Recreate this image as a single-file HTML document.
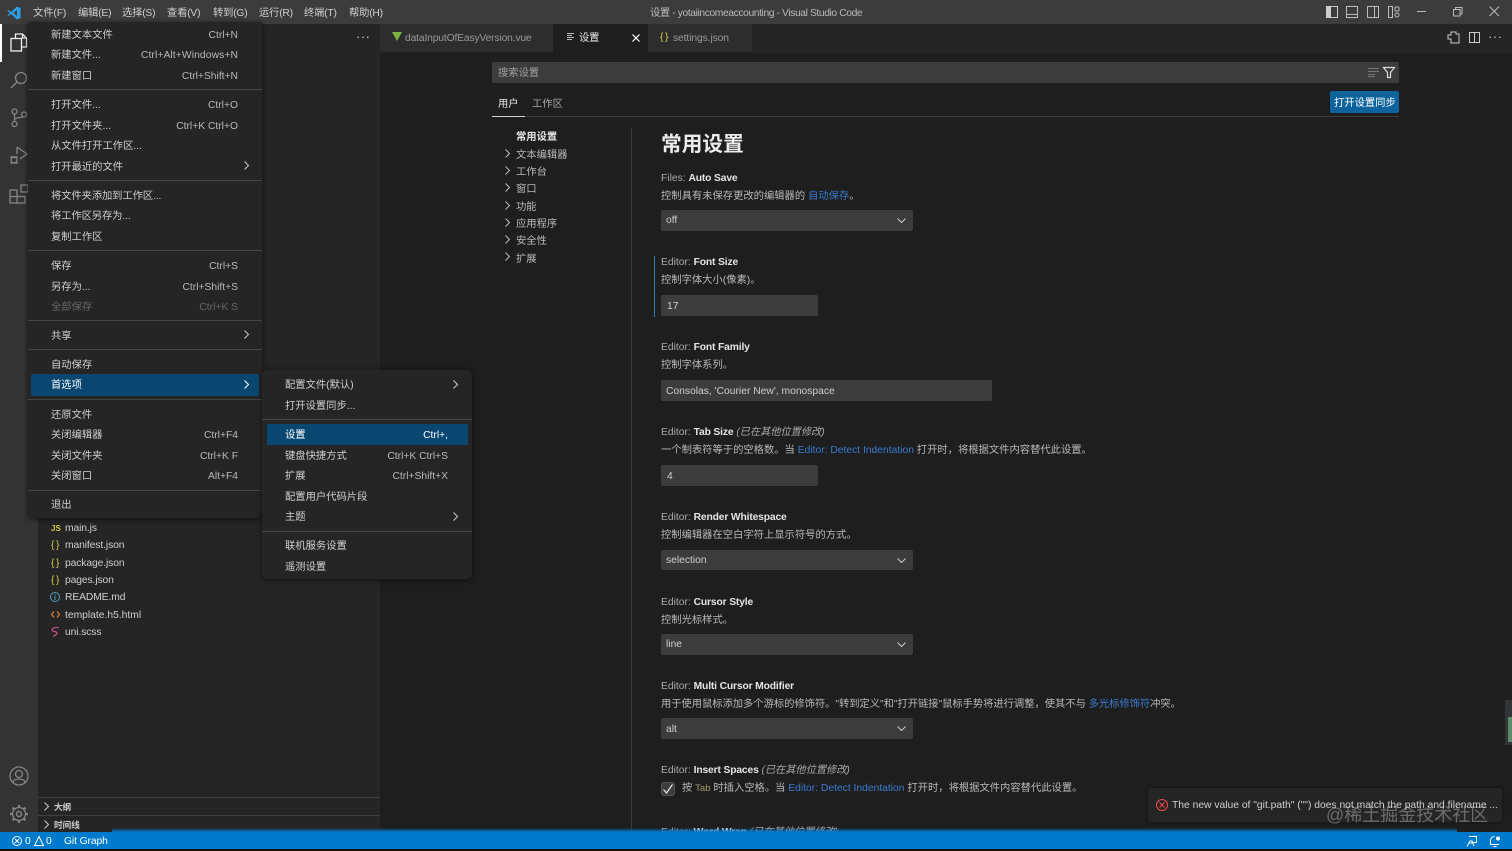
<!DOCTYPE html>
<html lang="zh-CN"><head><meta charset="utf-8"><title>设置 - yotaiincomeaccounting - Visual Studio Code</title>
<style>
*{box-sizing:border-box}
html,body{margin:0;width:1512px;height:851px;overflow:hidden;background:#1e1e1e}
body{position:relative;font:10.3px/14px "Liberation Sans","Noto Sans CJK SC",sans-serif;color:#ccc;filter:blur(.3px)}
.b{position:absolute}
.t{position:absolute;white-space:nowrap;transform:translateY(calc(-50% + 2px))}
.r{text-align:right}
.sep{position:absolute;height:1px;background:#454545}
.l{color:#3a7bd0}
.w{color:#e4e4e4;font-weight:bold;letter-spacing:-.15px}
.g{color:#aaa}
.in{position:absolute;background:#3c3c3c;border-radius:2px}
.i{font-style:italic;color:#aaa;letter-spacing:-.1px}
svg{position:absolute;overflow:visible}
.m{color:#cfcfcf}
.f{letter-spacing:-.1px}
.d{color:#b9b9b9}
.br{color:#cbcb41;letter-spacing:1.5px}
</style></head><body>

<!-- title bar -->
<div class="b" style="left:0;top:0;width:1512px;height:24px;background:#3c3c3c"></div>
<svg style="left:7px;top:6px" width="14" height="14" viewBox="0 0 14 14"><path d="M10 0.5 13.5 2v10L10 13.5 4 8l-2.600 2L.3 9.400 3 7 .3 4.600 1.400 4 4 6zM10 4 6.300 7 10 10z" fill="#2d9fe6"/></svg>
<div class="t m" style="left:33px;top:12px;letter-spacing:-.1px">文件(F)</div>
<div class="t m" style="left:78px;top:12px;letter-spacing:-.2px">编辑(E)</div>
<div class="t m" style="left:122px;top:12px;letter-spacing:-.2px">选择(S)</div>
<div class="t m" style="left:167px;top:12px;letter-spacing:-.2px">查看(V)</div>
<div class="t m" style="left:213px;top:12px;letter-spacing:-.2px">转到(G)</div>
<div class="t m" style="left:259px;top:12px;letter-spacing:-.2px">运行(R)</div>
<div class="t m" style="left:304px;top:12px;letter-spacing:-.2px">终端(T)</div>
<div class="t m" style="left:349px;top:12px;letter-spacing:-.2px">帮助(H)</div>
<div class="t d" style="left:650px;top:12px;letter-spacing:-.4px">设置 - yotaiincomeaccounting - Visual Studio Code</div>
<svg style="left:1326px;top:6px" width="12" height="12"><rect x=".5" y=".5" width="11" height="11" fill="none" stroke="#ccc"/><rect x="0" y="0" width="5" height="12" fill="#ccc"/></svg>
<svg style="left:1346px;top:6px" width="12" height="12"><rect x=".5" y=".5" width="11" height="11" fill="none" stroke="#bbb"/><path d="M0 8.500h12" stroke="#bbb"/></svg>
<svg style="left:1367px;top:6px" width="12" height="12"><rect x=".5" y=".5" width="11" height="11" fill="none" stroke="#bbb"/><path d="M7.500 0v12" stroke="#bbb"/></svg>
<svg style="left:1388px;top:6px" width="12" height="12"><rect x=".5" y=".5" width="4" height="11" fill="none" stroke="#bbb"/><rect x="7" y="1" width="4" height="4" rx="1" fill="none" stroke="#bbb"/><rect x="7" y="7" width="4" height="4" rx="2" fill="none" stroke="#bbb"/></svg>
<svg style="left:1417px;top:11px" width="10" height="2"><path d="M0 .5h9" stroke="#bbb"/></svg>
<svg style="left:1453px;top:7px" width="10" height="10"><rect x=".5" y="2.500" width="6.500" height="6.500" fill="none" stroke="#bbb"/><path d="M2.500 2.500V.5h6.500v6.500H7" fill="none" stroke="#bbb"/></svg>
<svg style="left:1489px;top:6px" width="11" height="11"><path d="M.5.500l9.500 9.500M10 .5.500 10" stroke="#bbb"/></svg>

<!-- activity bar -->
<div class="b" style="left:0;top:24px;width:38px;height:808px;background:#333"></div>
<div class="b" style="left:0;top:24px;width:2px;height:38px;background:#fff"></div>
<svg style="left:10px;top:33px" width="18" height="19" fill="none" stroke="#f0f0f0" stroke-width="1.300"><path d="M5.500 5V1h7l4 4v9h-5M12.500 1v4h4"/><rect x="1" y="5.500" width="10.500" height="12.500"/></svg>
<svg style="left:10px;top:71px" width="18" height="18" fill="none" stroke="#858585" stroke-width="1.300"><circle cx="11" cy="7" r="5.500"/><path d="M7 11 1 17"/></svg>
<svg style="left:11px;top:108px" width="16" height="20" fill="none" stroke="#858585" stroke-width="1.300"><circle cx="3.500" cy="3.500" r="2.500"/><circle cx="3.500" cy="16" r="2.500"/><circle cx="13" cy="6.500" r="2.500"/><path d="M3.500 6v7.500M3.500 12c0-3 7-2 9.500-3.500"/></svg>
<svg style="left:9px;top:146px" width="20" height="20" fill="none" stroke="#858585" stroke-width="1.300"><path d="M8 1v7M8 1l10 7-7 5"/><circle cx="5" cy="14" r="3"/><path d="M1 11h8M1 17h8M5 10v2"/></svg>
<svg style="left:9px;top:184px" width="20" height="20" fill="none" stroke="#858585" stroke-width="1.300"><path d="M1 6h7v13H1zM1 12.500h15v6.500H8M8 6v6.500"/><rect x="12" y="1" width="7" height="7"/></svg>
<svg style="left:9px;top:766px" width="20" height="20" fill="none" stroke="#858585" stroke-width="1.300"><circle cx="10" cy="10" r="9"/><circle cx="10" cy="8" r="3.500"/><path d="M4 16c1-4 11-4 12 0"/></svg>
<svg style="left:9px;top:804px" width="20" height="20" fill="none" stroke="#858585" stroke-width="1.400"><circle cx="10" cy="10" r="2.500"/><circle cx="10" cy="10" r="6.500" stroke-width="1.300"/><path d="M10 1v3M10 16v3M1 10h3M16 10h3M3.600 3.600l2.100 2.100M14.300 14.300l2.100 2.100M3.600 16.400l2.100-2.100M14.300 5.700l2.100-2.100" stroke-width="2.200"/></svg>

<!-- sidebar -->
<div class="b" style="left:38px;top:24px;width:342px;height:808px;background:#252526"></div>
<div class="t" style="left:356px;top:35px;font-size:13px;letter-spacing:.5px;color:#ccc">···</div>
<div class="t" style="left:51px;top:527px;color:#cbcb41;font-weight:bold;font-size:8px">JS</div>
<div class="t m f" style="left:65px;top:527px">main.js</div>
<div class="t br" style="left:51px;top:544px">{}</div>
<div class="t m f" style="left:65px;top:544px">manifest.json</div>
<div class="t br" style="left:51px;top:562px">{}</div>
<div class="t m f" style="left:65px;top:562px">package.json</div>
<div class="t br" style="left:51px;top:579px">{}</div>
<div class="t m f" style="left:65px;top:579px">pages.json</div>
<svg style="left:50px;top:592px" width="10" height="10" fill="none" stroke="#519aba"><circle cx="5" cy="5" r="4.500"/><path d="M5 4v4M5 2v1"/></svg>
<div class="t m f" style="left:65px;top:596px">README.md</div>
<svg style="left:51px;top:611px" width="9" height="7" fill="none" stroke="#e37933" stroke-width="1.200"><path d="M3 .5 .5 3.500 3 6.500M6 .5 8.500 3.500 6 6.500"/></svg>
<div class="t m" style="left:65px;top:614px">template.h5.html</div>
<svg style="left:51px;top:627px" width="9" height="10" fill="none" stroke="#c6538c" stroke-width="1.200"><path d="M8 1C4-.5 1 1.500 1 3c0 2 6 1 5 3.500C5 8 3 9 2 9.500"/></svg>
<div class="t m f" style="left:65px;top:631px">uni.scss</div>
<div class="b" style="left:38px;top:797px;width:342px;height:1px;background:#3f3f3f"></div>
<div class="b" style="left:38px;top:815px;width:342px;height:1px;background:#3f3f3f"></div>
<svg style="left:44px;top:802px" width="5" height="9" fill="none" stroke="#ccc"><path d="M.5.500l4 4-4 4"/></svg>
<svg style="left:44px;top:820px" width="5" height="9" fill="none" stroke="#ccc"><path d="M.5.500l4 4-4 4"/></svg>
<div class="t w" style="left:54px;top:805px;font-size:8.700px;color:#ccc">大纲</div>
<div class="t w" style="left:54px;top:823px;font-size:8.700px;color:#ccc">时间线</div>

<!-- tabs -->
<div class="b" style="left:380px;top:24px;width:1132px;height:29px;background:#252526"></div>
<div class="b" style="left:380px;top:24px;width:173px;height:27px;background:#2d2d2d"></div>
<div class="b" style="left:553px;top:24px;width:95px;height:29px;background:#1e1e1e"></div>
<div class="b" style="left:648px;top:24px;width:104px;height:27px;background:#2d2d2d"></div>
<svg style="left:392px;top:32px" width="10" height="9"><path d="M0 0h10L5 9z" fill="#7cb342"/></svg>
<div class="t" style="left:405px;top:37px;color:#9a9a9a;letter-spacing:-.15px">dataInputOfEasyVersion.vue</div>
<svg style="left:567px;top:33px" width="8" height="8" stroke="#bbb"><path d="M0 .5h7M0 2.500h5M0 4.500h7M0 6.500h5"/></svg>
<div class="t w" style="left:579px;top:37px;font-weight:normal">设置</div>
<svg style="left:632px;top:34px" width="8" height="8" stroke="#fff" stroke-width="1.200"><path d="M.5.500l7 7M7.500.500l-7 7"/></svg>
<div class="t br" style="left:660px;top:36px">{}</div>
<div class="t f" style="left:673px;top:37px;color:#9a9a9a">settings.json</div>
<svg style="left:1447px;top:31px" width="13" height="13" fill="none" stroke="#ccc"><path d="M1 4h3V1h5v2l3 0v9H4V8H1z"/></svg>
<svg style="left:1469px;top:32px" width="11" height="11" fill="none" stroke="#ccc"><rect x=".5" y=".5" width="10" height="10"/><path d="M5.500 0v11"/></svg>
<div class="t" style="left:1488px;top:35px;font-size:13px;letter-spacing:.5px;color:#ccc">···</div>

<!-- settings header -->
<div class="in" style="left:492px;top:62px;width:907px;height:21px"></div>
<div class="t" style="left:498px;top:72px;color:#a0a0a0">搜索设置</div>
<svg style="left:1368px;top:68px" width="11" height="9" stroke="#777"><path d="M0 .5h11M0 3.500h11M0 6.500h7M0 8.500h7"/></svg>
<svg style="left:1383px;top:67px" width="12" height="11" fill="none" stroke="#ddd" stroke-width="1.200"><path d="M.5.500h11L7.500 5.500V10.500H4.500V5.500z"/></svg>
<div class="t w" style="left:498px;top:103px;font-weight:normal;color:#e7e7e7;letter-spacing:0">用户</div>
<div class="t" style="left:532px;top:103px;color:#a8a8a8">工作区</div>
<div class="b" style="left:492px;top:116px;width:907px;height:1px;background:#3c3c3c"></div>
<div class="b" style="left:492px;top:116px;width:33px;height:1px;background:#d0d0d0"></div>
<div class="b" style="left:1330px;top:91px;width:69px;height:22px;background:#0e639c;border-radius:2px"></div>
<div class="t" style="left:1334px;top:102px;color:#fff">打开设置同步</div>

<!-- toc -->
<div class="t w" style="left:516px;top:136px;letter-spacing:0">常用设置</div>
<div class="t d" style="left:516px;top:154px">文本编辑器</div>
<div class="t d" style="left:516px;top:171px">工作台</div>
<div class="t d" style="left:516px;top:188px">窗口</div>
<div class="t d" style="left:516px;top:206px">功能</div>
<div class="t d" style="left:516px;top:223px">应用程序</div>
<div class="t d" style="left:516px;top:240px">安全性</div>
<div class="t d" style="left:516px;top:258px">扩展</div>
<svg style="left:505px;top:149px" width="5" height="112" fill="none" stroke="#bbb"><path d="M.5.500l4 4-4 4M.5 17.500l4 4-4 4M.5 34.500l4 4-4 4M.5 52.500l4 4-4 4M.5 69.500l4 4-4 4M.5 86.500l4 4-4 4M.5 103.500l4 4-4 4"/></svg>
<div class="b" style="left:631px;top:128px;width:1px;height:704px;background:#3a3a3a"></div>

<!-- settings -->
<div class="t w" style="left:661px;top:143px;font-size:20.700px;color:#ececec;letter-spacing:0">常用设置</div>

<div class="t g" style="left:661px;top:177px">Files: <span class="w">Auto Save</span></div>
<div class="t d" style="left:661px;top:195px">控制具有未保存更改的编辑器的 <span class="l">自动保存</span>。</div>
<div class="in" style="left:661px;top:210px;width:252px;height:21px"></div>
<div class="t m" style="left:666px;top:219px">off</div>

<div class="b" style="left:654px;top:256px;width:1px;height:61px;background:#2a7fb0"></div>
<div class="t g" style="left:661px;top:261px">Editor: <span class="w">Font Size</span></div>
<div class="t d" style="left:661px;top:279px">控制字体大小(像素)。</div>
<div class="in" style="left:661px;top:295px;width:157px;height:21px"></div>
<div class="t m" style="left:667px;top:305px">17</div>

<div class="t g" style="left:661px;top:346px">Editor: <span class="w">Font Family</span></div>
<div class="t d" style="left:661px;top:364px">控制字体系列。</div>
<div class="in" style="left:661px;top:380px;width:331px;height:21px"></div>
<div class="t m" style="left:666px;top:390px">Consolas, 'Courier New', monospace</div>

<div class="t g" style="left:661px;top:431px">Editor: <span class="w">Tab Size</span> <span class="i">(已在其他位置修改)</span></div>
<div class="t d" style="left:661px;top:449px">一个制表符等于的空格数。当 <span class="l">Editor: Detect Indentation</span> 打开时，将根据文件内容替代此设置。</div>
<div class="in" style="left:661px;top:465px;width:157px;height:21px"></div>
<div class="t m" style="left:667px;top:475px">4</div>

<div class="t g" style="left:661px;top:516px">Editor: <span class="w">Render Whitespace</span></div>
<div class="t d" style="left:661px;top:534px">控制编辑器在空白字符上显示符号的方式。</div>
<div class="in" style="left:661px;top:550px;width:252px;height:20px"></div>
<div class="t m" style="left:666px;top:559px">selection</div>

<div class="t g" style="left:661px;top:601px">Editor: <span class="w">Cursor Style</span></div>
<div class="t d" style="left:661px;top:619px">控制光标样式。</div>
<div class="in" style="left:661px;top:634px;width:252px;height:21px"></div>
<div class="t m" style="left:666px;top:643px">line</div>

<div class="t g" style="left:661px;top:685px">Editor: <span class="w">Multi Cursor Modifier</span></div>
<div class="t d" style="left:661px;top:703px;letter-spacing:-.04px">用于使用鼠标添加多个游标的修饰符。"转到定义"和"打开链接"鼠标手势将进行调整，使其不与 <span class="l">多光标修饰符</span>冲突。</div>
<div class="in" style="left:661px;top:718px;width:252px;height:21px"></div>
<div class="t m" style="left:666px;top:728px">alt</div>

<div class="t g" style="left:661px;top:769px">Editor: <span class="w">Insert Spaces</span> <span class="i">(已在其他位置修改)</span></div>
<div class="in" style="left:661px;top:782px;width:14px;height:14px;border-radius:3px;border:1px solid #555"></div>
<svg style="left:663px;top:784px" width="10" height="10" fill="none" stroke="#e8e8e8" stroke-width="1.200"><path d="M.5 5.500 3.500 9 9.500 .5"/></svg>
<div class="t d" style="left:682px;top:787px">按 <span style="color:#a89a70;font-size:9.500px">Tab</span> 时插入空格。当 <span class="l">Editor: Detect Indentation</span> 打开时，将根据文件内容替代此设置。</div>
<div class="t g" style="left:661px;top:831px">Editor: <span class="w">Word Wrap</span> <span class="i">(已在其他位置修改)</span></div>

<svg style="left:897px;top:218px" width="9" height="436" fill="none" stroke="#ccc"><path d="M.5.500l4 4 4-4"/><path d="M.5 340.500l4 4 4-4"/><path d="M.5 424.500l4 4 4-4"/></svg>
<svg style="left:897px;top:726px" width="9" height="6" fill="none" stroke="#ccc"><path d="M.5.500l4 4 4-4"/></svg>

<!-- scroll marker -->
<div class="b" style="left:1505px;top:700px;width:7px;height:45px;background:#303437"></div>
<div class="b" style="left:1508px;top:717px;width:4px;height:25px;background:#5d8a6b"></div>

<!-- file menu -->
<div class="b" style="left:28px;top:22px;width:234px;height:496px;background:#252526;border-radius:0 0 5px 5px;box-shadow:0 1px 6px rgba(0,0,0,.6)"></div>
<div class="b" style="left:31px;top:374px;width:228px;height:22px;background:#094771;border-radius:2px"></div>
<div class="t m" style="left:51px;top:34px">新建文本文件</div><div class="t r d" style="right:1274px;top:34px">Ctrl+N</div>
<div class="t m" style="left:51px;top:54px">新建文件...</div><div class="t r d" style="right:1274px;top:54px;letter-spacing:.1px">Ctrl+Alt+Windows+N</div>
<div class="t m" style="left:51px;top:75px">新建窗口</div><div class="t r d" style="right:1274px;top:75px">Ctrl+Shift+N</div>
<div class="sep" style="left:28px;top:89px;width:234px"></div>
<div class="t m" style="left:51px;top:104px">打开文件...</div><div class="t r d" style="right:1274px;top:104px">Ctrl+O</div>
<div class="t m" style="left:51px;top:125px">打开文件夹...</div><div class="t r d" style="right:1274px;top:125px">Ctrl+K Ctrl+O</div>
<div class="t m" style="left:51px;top:145px">从文件打开工作区...</div>
<div class="t m" style="left:51px;top:166px">打开最近的文件</div>
<div class="sep" style="left:28px;top:180px;width:234px"></div>
<div class="t m" style="left:51px;top:195px;letter-spacing:-.1px">将文件夹添加到工作区...</div>
<div class="t m" style="left:51px;top:215px;letter-spacing:-.1px">将工作区另存为...</div>
<div class="t m" style="left:51px;top:236px">复制工作区</div>
<div class="sep" style="left:28px;top:250px;width:234px"></div>
<div class="t m" style="left:51px;top:265px">保存</div><div class="t r d" style="right:1274px;top:265px">Ctrl+S</div>
<div class="t m" style="left:51px;top:286px">另存为...</div><div class="t r d" style="right:1274px;top:286px">Ctrl+Shift+S</div>
<div class="t" style="left:51px;top:306px;color:#666">全部保存</div><div class="t r" style="right:1274px;top:306px;color:#666">Ctrl+K S</div>
<div class="sep" style="left:28px;top:320px;width:234px"></div>
<div class="t m" style="left:51px;top:335px">共享</div>
<div class="sep" style="left:28px;top:349px;width:234px"></div>
<div class="t m" style="left:51px;top:364px">自动保存</div>
<div class="t" style="left:51px;top:384px;color:#fff">首选项</div>
<div class="sep" style="left:28px;top:399px;width:234px"></div>
<div class="t m" style="left:51px;top:414px">还原文件</div>
<div class="t m" style="left:51px;top:434px">关闭编辑器</div><div class="t r d" style="right:1274px;top:434px">Ctrl+F4</div>
<div class="t m" style="left:51px;top:455px">关闭文件夹</div><div class="t r d" style="right:1274px;top:455px">Ctrl+K F</div>
<div class="t m" style="left:51px;top:475px">关闭窗口</div><div class="t r d" style="right:1274px;top:475px">Alt+F4</div>
<div class="sep" style="left:28px;top:490px;width:234px"></div>
<div class="t m" style="left:51px;top:504px">退出</div>
<svg style="left:244px;top:161px" width="6" height="180" fill="none" stroke="#ccc"><path d="M.5.500l4 4-4 4"/><path d="M.5 169.500l4 4-4 4"/></svg>
<svg style="left:244px;top:380px" width="6" height="9" fill="none" stroke="#fff"><path d="M.5.500l4 4-4 4"/></svg>

<!-- submenu -->
<div class="b" style="left:262px;top:370px;width:210px;height:209px;background:#252526;border-radius:5px;box-shadow:0 1px 6px rgba(0,0,0,.6)"></div>
<div class="b" style="left:267px;top:424px;width:201px;height:21px;background:#094771"></div>
<div class="t m" style="left:285px;top:384px">配置文件(默认)</div>
<div class="t m" style="left:285px;top:405px">打开设置同步...</div>
<div class="sep" style="left:262px;top:419px;width:210px"></div>
<div class="t" style="left:285px;top:434px;color:#fff">设置</div><div class="t r" style="right:1064px;top:434px;color:#fff">Ctrl+,</div>
<div class="t m" style="left:285px;top:455px">键盘快捷方式</div><div class="t r d" style="right:1064px;top:455px">Ctrl+K Ctrl+S</div>
<div class="t m" style="left:285px;top:475px">扩展</div><div class="t r d" style="right:1064px;top:475px">Ctrl+Shift+X</div>
<div class="t m" style="left:285px;top:496px">配置用户代码片段</div>
<div class="t m" style="left:285px;top:516px">主题</div>
<div class="sep" style="left:262px;top:531px;width:210px"></div>
<div class="t m" style="left:285px;top:545px">联机服务设置</div>
<div class="t m" style="left:285px;top:566px">遥测设置</div>
<svg style="left:453px;top:380px" width="6" height="141" fill="none" stroke="#ccc"><path d="M.5.500l4 4-4 4"/><path d="M.5 132.500l4 4-4 4"/></svg>

<!-- notification -->
<div class="b" style="left:1148px;top:788px;width:354px;height:34px;background:#252526;border-radius:3px;box-shadow:0 0 4px rgba(0,0,0,.5)"></div>
<svg style="left:1156px;top:799px" width="12" height="12" fill="none" stroke="#f14c4c"><circle cx="6" cy="6" r="5.500"/><path d="M3.500 3.500l5 5M8.500 3.500l-5 5"/></svg>
<div class="t m" style="left:1172px;top:804px">The new value of "git.path" ("") does not match the path and filename ...</div>

<!-- status bar -->
<div class="b" style="left:112px;top:828px;width:1345px;height:4px;background:linear-gradient(rgba(0,122,204,0),#007acc)"></div>
<div class="b" style="left:0;top:832px;width:1512px;height:17px;background:#007acc"></div>
<div class="b" style="left:0;top:849px;width:1512px;height:2px;background:#111"></div>
<svg style="left:12px;top:836px" width="10" height="10" fill="none" stroke="#fff"><circle cx="5" cy="5" r="4.500"/><path d="M3 3l4 4M7 3l-4 4"/></svg>
<div class="t" style="left:25px;top:840px;color:#fff">0</div>
<svg style="left:34px;top:836px" width="10" height="10" fill="none" stroke="#fff"><path d="M5 .5 9.500 9.500H.5z"/></svg>
<div class="t" style="left:46px;top:840px;color:#fff">0</div>
<div class="t f" style="left:64px;top:840px;color:#fff">Git Graph</div>
<svg style="left:1466px;top:836px" width="11" height="11" fill="none" stroke="#fff"><path d="M3 .5h7.500v6H6M1 10.500 4 5h2l2 5M3 7h4"/></svg>
<svg style="left:1490px;top:836px" width="10" height="11" fill="none" stroke="#fff"><path d="M.5 8.500v-4a4 4 0 0 1 4-4M.5 8.500h8.500M3.500 10.500h3"/><circle cx="8" cy="2.500" r="2" fill="#fff" stroke="none"/></svg>

<!-- watermark -->
<div class="t" style="left:1326px;top:813px;font-size:18px;line-height:22px;color:rgba(255,255,255,.32)">@稀土掘金技术社区</div>
</body></html>
